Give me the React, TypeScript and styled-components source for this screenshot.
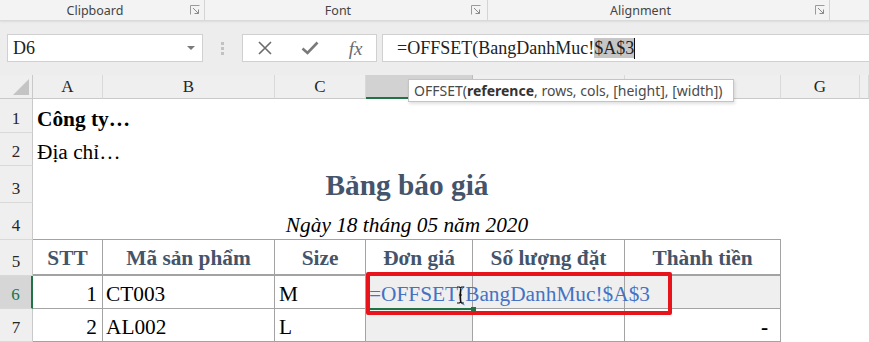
import React from 'react';
import styled, { createGlobalStyle } from 'styled-components';

const Global = createGlobalStyle`
  html, body { margin: 0; padding: 0; background: #fff; }
  body { width: 869px; height: 342px; overflow: hidden; }
  * { box-sizing: border-box; }
`;

const Page = styled.div`
  position: relative;
  width: 869px;
  height: 342px;
  overflow: hidden;
  display: flex;
  flex-direction: column;
  background: #fff;
`;

/* ---------- Ribbon ---------- */
const Ribbon = styled.div`
  height: 21px;
  flex: none;
  display: flex;
  background: #f3f3f3;
  border-bottom: 1px solid #d9d9d9;
  box-shadow: 0 1px 2px rgba(0, 0, 0, 0.07);
  position: relative;
  z-index: 2;
`;

const Group = styled.div<{ $w: number; $pad: number; $gap: number }>`
  width: ${(p) => p.$w}px;
  flex: none;
  display: flex;
  align-items: center;
  border-right: 1px solid #d4d4d4;
  padding-right: ${(p) => p.$gap}px;
  & > span:first-child {
    flex: 1;
    text-align: center;
    padding-right: ${(p) => p.$pad}px;
  }
`;

const GroupLabel = styled.span`
  font-family: 'Noto Sans', 'Open Sans', sans-serif;
  font-size: 12.5px;
  color: #444;
  line-height: 20px;
  padding-top: 2px;
`;

const Launcher = () => (
  <svg width="10" height="10" viewBox="0 0 10 10">
    <path d="M0.5 9.5V0.5H9.5" fill="none" stroke="#9a9a9a" strokeWidth="1" />
    <path d="M3 3L8.5 8.5M8.5 4.5V8.5H4.5" fill="none" stroke="#8a8a8a" strokeWidth="1" />
  </svg>
);

/* ---------- Formula bar ---------- */
const FormulaRow = styled.div`
  height: 54px;
  flex: none;
  display: flex;
  align-items: flex-start;
  padding: 13px 0 0 7px;
  background: #ededed;
`;

const NameBox = styled.div`
  width: 196px;
  height: 28px;
  background: #fff;
  border: 1px solid #d0d0d0;
  display: flex;
  align-items: center;
  justify-content: space-between;
  padding: 0 7px 0 5px;
  font-family: 'Liberation Serif', serif;
  font-size: 18px;
  color: #222;
`;

const Caret = styled.span`
  width: 0;
  height: 0;
  border-left: 4px solid transparent;
  border-right: 4px solid transparent;
  border-top: 4px solid #7a7a7a;
`;

const Grip = styled.div`
  width: 39px;
  height: 28px;
  display: flex;
  flex-direction: column;
  align-items: center;
  justify-content: center;
  gap: 2px;
  & > i {
    width: 3px;
    height: 3px;
    background: #c2c2c2;
    display: block;
  }
`;

const FxBox = styled.div`
  width: 135px;
  height: 28px;
  background: #fff;
  border: 1px solid #d0d0d0;
  display: grid;
  grid-template-columns: 44px 46px 45px;
  align-items: center;
  justify-items: center;
`;

const FxText = styled.span`
  font-family: 'Liberation Serif', serif;
  font-style: italic;
  font-size: 19px;
  color: #6a6a6a;
  line-height: 1;
`;

const FormulaInput = styled.div`
  flex: 1;
  height: 28px;
  margin-left: 5px;
  background: #fff;
  border: 1px solid #d0d0d0;
  border-right: none;
  display: flex;
  align-items: center;
  padding-left: 14px;
  font-family: 'Liberation Serif', serif;
  font-size: 18px;
  color: #222;
  white-space: nowrap;
`;

const Sel = styled.span`
  background: #c6c6c6;
  line-height: 20px;
`;

const TextCaret = styled.span`
  display: inline-block;
  width: 1px;
  height: 21px;
  background: #111;
  vertical-align: middle;
`;

/* ---------- Sheet grid ---------- */
const Sheet = styled.div`
  flex: 1;
  display: grid;
  grid-template-columns: 33px 70px 172px 91px 107px 152px 156px 79px 1fr;
  grid-template-rows: 24px 34px 33px 37px 37px 36px 33px 33px;
  position: relative;
`;

const Corner = styled.div`
  background: #efefef;
  border-right: 1px solid #c9c9c9;
  border-bottom: 1px solid #c9c9c9;
  display: flex;
  align-items: flex-end;
  justify-content: flex-end;
  padding: 0 3px 3px 0;
`;

const Triangle = styled.span`
  width: 0;
  height: 0;
  border-left: 16px solid transparent;
  border-bottom: 16px solid #c4c4c4;
`;

const ColHead = styled.div<{ $active?: boolean }>`
  background: ${(p) => (p.$active ? '#d2d2d2' : '#efefef')};
  border-right: 1px solid ${(p) => (p.$active ? '#bdbdbd' : '#d9d9d9')};
  border-bottom: ${(p) => (p.$active ? '2px solid #217346' : '1px solid #c9c9c9')};
  display: flex;
  align-items: center;
  justify-content: center;
  font-family: 'Liberation Serif', serif;
  font-size: 17px;
  color: ${(p) => (p.$active ? '#217346' : '#262626')};
`;

const RowHead = styled.div<{ $active?: boolean }>`
  background: ${(p) => (p.$active ? '#d6d6d6' : '#efefef')};
  border-right: ${(p) => (p.$active ? '2px solid #217346' : '1px solid #c9c9c9')};
  border-bottom: 1px solid #d9d9d9;
  display: flex;
  align-items: flex-end;
  justify-content: center;
  padding-bottom: 5px;
  font-family: 'Liberation Serif', serif;
  font-size: 17px;
  line-height: 1;
  color: ${(p) => (p.$active ? '#217346' : '#262626')};
`;

type CellProps = {
  $span?: number;
  $align?: 'left' | 'center' | 'right';
  $bold?: boolean;
  $italic?: boolean;
  $size?: number;
  $color?: string;
  $grid?: boolean;
  $bottom?: boolean;
  $bg?: string;
  $pb?: number;
  $pr?: number;
  $pl?: number;
};

const Cell = styled.div<CellProps>`
  grid-column: span ${(p) => p.$span ?? 1};
  display: flex;
  align-items: flex-end;
  justify-content: ${(p) =>
    p.$align === 'center' ? 'center' : p.$align === 'right' ? 'flex-end' : 'flex-start'};
  padding: 0 ${(p) => p.$pr ?? 4}px ${(p) => p.$pb ?? 1}px ${(p) => p.$pl ?? 4}px;
  font-family: 'Liberation Serif', serif;
  font-size: ${(p) => p.$size ?? 21.33}px;
  line-height: 1.15;
  font-weight: ${(p) => (p.$bold ? 700 : 400)};
  font-style: ${(p) => (p.$italic ? 'italic' : 'normal')};
  color: ${(p) => p.$color ?? '#000'};
  background: ${(p) => p.$bg ?? 'transparent'};
  white-space: nowrap;
  border-right: ${(p) => (p.$grid ? '1px solid #a3a3a3' : 'none')};
  border-bottom: ${(p) => (p.$grid || p.$bottom ? '1px solid #a3a3a3' : 'none')};
`;

const HeadCell = styled(Cell)`
  border-bottom: 2px solid #a3a3a3;
`;

const EditCell = styled(Cell)`
  position: relative;
  z-index: 1;
  overflow: visible;
  &::after {
    content: '';
    position: absolute;
    left: 2px;
    right: 0;
    bottom: -2px;
    height: 2px;
    background: #217346;
  }
  &::before {
    content: '';
    position: absolute;
    right: -4px;
    bottom: -3px;
    width: 5px;
    height: 4px;
    background: #217346;
  }
`;

const Tooltip = styled.div`
  position: absolute;
  left: 408px;
  top: 4px;
  width: 326px;
  height: 23px;
  background: #fff;
  border: 1px solid #c4c4c4;
  box-shadow: 1px 2px 3px rgba(0, 0, 0, 0.12);
  display: flex;
  align-items: center;
  padding-left: 5px;
  font-family: 'Noto Sans', 'Open Sans', sans-serif;
  font-size: 14px;
  color: #4a4a4a;
  white-space: nowrap;
  z-index: 5;
  & b {
    color: #333;
  }
`;

const RedBox = styled.div`
  position: absolute;
  left: 366px;
  top: 197px;
  width: 306px;
  height: 43px;
  border: 4px solid #e8141b;
  border-radius: 2px;
  z-index: 4;
  pointer-events: none;
`;

const IBeam = styled.svg`
  position: absolute;
  left: 456px;
  top: 211px;
  z-index: 6;
`;

/* D, E and F headers are hidden beneath the tooltip */
const cols = ['A', 'B', 'C', '', '', '', 'G', ''];
const headColor = '#44546a';

export default function App() {
  return (
    <Page>
      <Global />
      <Ribbon>
        <Group $w={205} $pad={0} $gap={4}>
          <GroupLabel>Clipboard</GroupLabel>
          <Launcher />
        </Group>
        <Group $w={283} $pad={0} $gap={6}>
          <GroupLabel>Font</GroupLabel>
          <Launcher />
        </Group>
        <Group $w={342} $pad={22} $gap={4}>
          <GroupLabel>Alignment</GroupLabel>
          <Launcher />
        </Group>
      </Ribbon>

      <FormulaRow>
        <NameBox>
          <span>D6</span>
          <Caret />
        </NameBox>
        <Grip>
          <i />
          <i />
          <i />
        </Grip>
        <FxBox>
          <svg width="16" height="16" viewBox="0 0 16 16">
            <path d="M2 2L14 14M14 2L2 14" stroke="#6b6b6b" strokeWidth="1.6" fill="none" />
          </svg>
          <svg width="18" height="14" viewBox="0 0 18 14">
            <path d="M1.5 7.5L6.5 12L16.5 1.5" stroke="#7a7a7a" strokeWidth="2.6" fill="none" />
          </svg>
          <FxText>fx</FxText>
        </FxBox>
        <FormulaInput>
          <span>=OFFSET(BangDanhMuc!</span>
          <Sel>$A$3</Sel>
          <TextCaret />
        </FormulaInput>
      </FormulaRow>

      <Sheet>
        <Corner>
          <Triangle />
        </Corner>
        {cols.map((c, i) => (
          <ColHead key={i} $active={i === 3}>
            {c}
          </ColHead>
        ))}

        {/* Row 1 */}
        <RowHead>1</RowHead>
        <Cell $bold>Công ty…</Cell>
        <Cell $span={7} />

        {/* Row 2 */}
        <RowHead>2</RowHead>
        <Cell>Địa chỉ…</Cell>
        <Cell $span={7} />

        {/* Row 3 */}
        <RowHead>3</RowHead>
        <Cell $span={6} $align="center" $bold $size={29.33} $color={headColor} $pb={0}>
          Bảng báo giá
        </Cell>
        <Cell $span={2} />

        {/* Row 4 */}
        <RowHead>4</RowHead>
        <Cell $span={6} $align="center" $italic $bottom>
          Ngày 18 tháng 05 năm 2020
        </Cell>
        <Cell $span={2} />

        {/* Row 5 */}
        <RowHead>5</RowHead>
        <HeadCell $grid $align="center" $bold $color={headColor} $pb={3}>STT</HeadCell>
        <HeadCell $grid $align="center" $bold $color={headColor} $pb={3}>Mã sản phẩm</HeadCell>
        <HeadCell $grid $align="center" $bold $color={headColor} $pb={3}>Size</HeadCell>
        <HeadCell $grid $align="center" $bold $color={headColor} $pb={3}>Đơn giá</HeadCell>
        <HeadCell $grid $align="center" $bold $color={headColor} $pb={3}>Số lượng đặt</HeadCell>
        <HeadCell $grid $align="center" $bold $color={headColor} $pb={3}>Thành tiền</HeadCell>
        <Cell $span={2} />

        {/* Row 6 */}
        <RowHead $active>6</RowHead>
        <Cell $grid $align="right" $pr={5}>1</Cell>
        <Cell $grid $pl={3}>CT003</Cell>
        <Cell $grid>M</Cell>
        <EditCell $grid $bg="#efefef" $color="#4472c4" $pl={3}>
          =OFFSET(BangDanhMuc!$A$3
        </EditCell>
        <Cell $grid $bg="#efefef" />
        <Cell $grid $bg="#efefef" />
        <Cell $span={2} />

        {/* Row 7 */}
        <RowHead>7</RowHead>
        <Cell $grid $align="right" $pr={5}>2</Cell>
        <Cell $grid $pl={3}>AL002</Cell>
        <Cell $grid>L</Cell>
        <Cell $grid $bg="#efefef" />
        <Cell $grid />
        <Cell $grid $align="right" $bold $pr={12}>-</Cell>
        <Cell $span={2} />

        <Tooltip>
          OFFSET(<b>reference</b>, rows, cols, [height], [width])
        </Tooltip>
        <RedBox />
        <IBeam width="9" height="18" viewBox="0 0 9 18">
          <path d="M1 1H3.5L4.5 2L5.5 1H8M4.5 2V16M1 17H3.5L4.5 16L5.5 17H8M3 9H6" stroke="#111" strokeWidth="1.1" fill="none" />
        </IBeam>
      </Sheet>
    </Page>
  );
}
